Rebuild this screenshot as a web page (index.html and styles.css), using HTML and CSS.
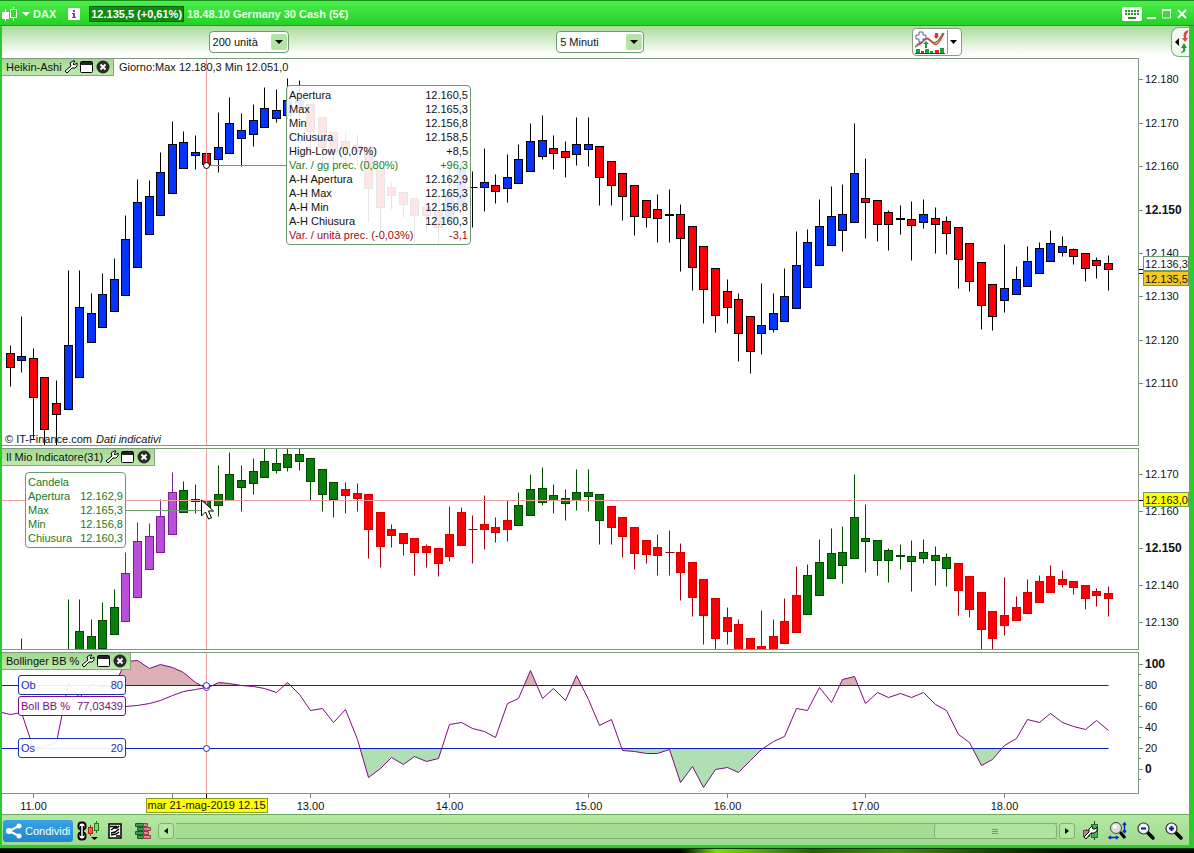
FILE: index.html
```html
<!DOCTYPE html>
<html lang="it">
<head>
    <meta charset="utf-8">
    <title>DAX - Germany 30 Cash (5€)</title>
    <link rel="stylesheet" href="styles.css">
</head>
<body>
    <!-- Shared icons -->
    <svg class="defs" width="0" height="0">
        <symbol id="wrench" viewBox="0 0 14 14">
            <path d="M1 11 L7 6 L6 3 L9 1 L11 1 L9 4 L10 5 L13 3 L13 6 L11 8 L8 8 L3 13 Z" fill="#fff" stroke="#000"/>
        </symbol>
        <symbol id="window" viewBox="0 0 14 14">
            <rect x="0.5" y="1.5" width="12" height="11" rx="1" fill="#fff" stroke="#000"/>
            <path d="M1 2h11v3H1z" fill="#222"/>
        </symbol>
        <symbol id="close" viewBox="0 0 14 14">
            <circle cx="7" cy="7" r="6.5" fill="#2c2c2c"/>
            <path d="M4.5 4.5l5 5M9.5 4.5l-5 5" stroke="#fff" stroke-width="2"/>
        </symbol>
        <symbol id="lens" viewBox="0 0 20 20">
            <path d="M11 11l6 6" stroke="#000" stroke-width="3.5" stroke-linecap="round"/>
            <circle cx="7.5" cy="7.5" r="5.5" fill="#f4f4f4" stroke="#333" stroke-width="1.2"/>
        </symbol>
    </svg>

    <div class="window">
        <header class="title-bar">
            <svg class="candle-logo" width="16" height="16" viewBox="0 0 16 16">
                <path d="M3.5 3v12M11.5 1v14" stroke="#fff"/>
                <rect x="0" y="6" width="7" height="7" fill="#fff"/>
                <rect x="8.5" y="3.5" width="6" height="8" fill="#39d939" stroke="#fff"/>
            </svg>
            <svg class="drop" width="8" height="4" viewBox="0 0 8 4"><path d="M0 0h8L4 4z" fill="#fff"/></svg>
            <span class="ticker">DAX</span>
            <svg class="info" width="12" height="12" viewBox="0 0 12 12">
                <rect width="12" height="12" rx="1" fill="#fff"/>
                <path d="M5 2h2v2H5zM4 5h3v4h1v1H4V9h1V6H4z" fill="#7a4aa0"/>
            </svg>
            <span class="quote">12.135,5 (+0,61%)</span>
            <span class="instrument">18.48.10 Germany 30 Cash (5€)</span>
            <div class="window-buttons">
                <button type="button" aria-label="Tastiera">
                    <svg width="20" height="14" viewBox="0 0 20 14">
                        <rect width="20" height="14" rx="2" fill="#fff"/>
                        <path d="M3 4h14M3 7h14" stroke="#1a9a1a" stroke-width="2" stroke-dasharray="2 1"/>
                        <path d="M6 11h8" stroke="#1a9a1a" stroke-width="2"/>
                    </svg>
                </button>
                <button type="button" aria-label="Riduci">
                    <svg width="10" height="12" viewBox="0 0 10 12"><path d="M0 10h9" stroke="#fff" stroke-width="2"/></svg>
                </button>
                <button type="button" aria-label="Ingrandisci">
                    <svg width="10" height="12" viewBox="0 0 10 12"><path d="M.5 2h8v8h-8z" fill="none" stroke="#d8ffd8"/><path d="M0 2h9" stroke="#fff" stroke-width="2"/></svg>
                </button>
                <button type="button" aria-label="Chiudi">
                    <svg width="11" height="12" viewBox="0 0 11 12"><path d="M1 2l8 8M9 2l-8 8" stroke="#fff" stroke-width="2"/></svg>
                </button>
            </div>
        </header>

        <div class="toolbar">
            <div class="combo">
                <select aria-label="Unità"><option>200 unità</option></select>
                <svg class="combo-arrow" width="16" height="16" viewBox="0 0 16 16"><path d="M4 6h8l-4 4z"/></svg>
            </div>
            <div class="combo combo-wide">
                <select aria-label="Periodo"><option>5 Minuti</option></select>
                <svg class="combo-arrow" width="16" height="16" viewBox="0 0 16 16"><path d="M4 6h8l-4 4z"/></svg>
            </div>
            <button type="button" class="indicator-button" aria-label="Indicatori">
                <svg width="32" height="24" viewBox="0 0 32 24">
                    <path d="M1 17c5-3 8-11 13-8s7 9 15-6" fill="none" stroke="#55883a" stroke-width="1.5"/>
                    <path d="M3 14c4 4 8-10 13-4s7 8 14-7" fill="none" stroke="#e04040" stroke-width="1.5"/>
                    <path d="M5 2h4v3h3v4H9v3H5V9H2V5h3z" fill="#fff" stroke="#5560a0"/>
                    <path d="M11 18v-4H9l3-3 3 3h-2v4z" fill="#1f9a3c"/>
                    <path d="M21 3h3v3h1l-3 3-2-3h1z" fill="#e03030"/>
                    <path d="M2 23v-4h4v4M11 23v-4h4v4M16 23v-2h3v2M26 23v-5h4v5" fill="#15a03a"/>
                    <path d="M7 23v-2h3v2M21 23v-3h4v3" fill="#e02020"/>
                    <path d="M1 23.5h30" stroke="#233a8a"/>
                </svg>
                <span class="split"><svg width="7" height="4" viewBox="0 0 7 4"><path d="M0 0h7L3.5 4z"/></svg></span>
            </button>
            <button type="button" class="side-tab" aria-label="Ordini">
                <svg width="16" height="26" viewBox="0 0 16 26">
                    <path d="M6 9v8l-4-4z"/>
                    <path d="M15 1q-6 2-4 8h-2l3 4 3-4h-2q0-4 2-6z" fill="#e04444"/>
                    <path d="M8 24q6-1 4-5h2l-3-5-3 5h2q1 3-2 4z" fill="#1a9a3a"/>
                </svg>
            </button>
        </div>

        <main class="charts">
            <section class="panel panel-price">
                <div class="plot">
                    <svg class="canvas" id="pricePlot"></svg>
                    <div class="panel-head">
                        <span>Heikin-Ashi</span>
                        <svg width="14" height="14"><use href="#wrench"/></svg>
                        <svg width="14" height="14"><use href="#window"/></svg>
                        <svg width="14" height="14"><use href="#close"/></svg>
                    </div>
                    <p class="day-range">Giorno:Max 12.180,3 Min 12.051,0</p>
                    <p class="copyright">© IT-Finance.com <i>Dati indicativi</i></p>
                    <table class="tip tip-price">
                        <tr><td>Apertura</td><td>12.160,5</td></tr>
                        <tr><td>Max</td><td>12.165,3</td></tr>
                        <tr><td>Min</td><td>12.156,8</td></tr>
                        <tr><td>Chiusura</td><td>12.158,5</td></tr>
                        <tr><td>High-Low (0,07%)</td><td>+8,5</td></tr>
                        <tr class="up"><td>Var. / gg prec. (0,80%)</td><td>+96,3</td></tr>
                        <tr><td>A-H Apertura</td><td>12.162,9</td></tr>
                        <tr><td>A-H Max</td><td>12.165,3</td></tr>
                        <tr><td>A-H Min</td><td>12.156,8</td></tr>
                        <tr><td>A-H Chiusura</td><td>12.160,3</td></tr>
                        <tr class="down"><td>Var. / unità prec. (-0,03%)</td><td>-3,1</td></tr>
                    </table>
                </div>
                <div class="axis">
                    <svg class="canvas" id="priceAxis"></svg>
                    <div class="tags tags-price">
                        <span class="tag">12.136,3</span>
                        <span class="tag tag-last">12.135,5</span>
                    </div>
                </div>
            </section>

            <section class="panel panel-indicator">
                <div class="plot">
                    <svg class="canvas" id="indicatorPlot"></svg>
                    <div class="panel-head">
                        <span>Il Mio Indicatore(31)</span>
                        <svg width="14" height="14"><use href="#wrench"/></svg>
                        <svg width="14" height="14"><use href="#window"/></svg>
                        <svg width="14" height="14"><use href="#close"/></svg>
                    </div>
                    <table class="tip tip-candle">
                        <tr><td colspan="2">Candela</td></tr>
                        <tr><td>Apertura</td><td>12.162,9</td></tr>
                        <tr><td>Max</td><td>12.165,3</td></tr>
                        <tr><td>Min</td><td>12.156,8</td></tr>
                        <tr><td>Chiusura</td><td>12.160,3</td></tr>
                    </table>
                </div>
                <div class="axis">
                    <svg class="canvas" id="indicatorAxis"></svg>
                    <div class="tags tags-indicator"><span class="tag tag-cursor">12.163,0</span></div>
                </div>
            </section>

            <section class="panel panel-bollinger">
                <div class="plot">
                    <svg class="canvas" id="bollingerPlot"></svg>
                    <div class="panel-head">
                        <span>Bollinger BB %</span>
                        <svg width="14" height="14"><use href="#wrench"/></svg>
                        <svg width="14" height="14"><use href="#window"/></svg>
                        <svg width="14" height="14"><use href="#close"/></svg>
                    </div>
                    <div class="level level-ob"><span>Ob</span><span>80</span></div>
                    <div class="level level-bb"><span>Boll BB %</span><span>77,03439</span></div>
                    <div class="level level-os"><span>Os</span><span>20</span></div>
                </div>
                <div class="axis"><svg class="canvas" id="bollingerAxis"></svg></div>
            </section>

            <div class="time-axis">
                <svg class="canvas" id="timeAxis"></svg>
                <span class="date-tag" id="dateTag">mar 21-mag-2019 12.15</span>
            </div>
        </main>

        <footer class="bottom-bar">
            <button type="button" class="share">
                <svg width="16" height="16" viewBox="0 0 16 16">
                    <path d="M13 3L3 8l10 5" fill="none" stroke="#fff" stroke-width="2"/>
                    <circle cx="13" cy="3" r="2.5" fill="#fff"/><circle cx="3" cy="8" r="3" fill="#fff"/><circle cx="13" cy="13" r="2.5" fill="#fff"/>
                </svg>
                Condividi
            </button>
            <button type="button" class="tool" aria-label="Collega grafici">
                <svg width="24" height="20" viewBox="0 0 24 20">
                    <rect x="1.5" y="1.5" width="7" height="7" rx="3" fill="#fff" stroke="#000" stroke-width="2"/>
                    <rect x="1.5" y="11.5" width="7" height="7" rx="3" fill="#fff" stroke="#000" stroke-width="2"/>
                    <path d="M5 5v10" stroke="#000" stroke-width="4"/>
                    <path d="M5 5v10" stroke="#fff" stroke-width="1.5"/>
                    <path d="M13.5 4v11" stroke="#b02020"/><rect x="11.5" y="6.5" width="4" height="6" fill="#f06060" stroke="#b02020"/>
                    <path d="M19.5 0v12" stroke="#207a20"/><rect x="17.5" y="2.5" width="4" height="7" fill="#70e070" stroke="#207a20"/>
                    <path d="M14 16h7l-3.5 3z"/>
                </svg>
            </button>
            <button type="button" class="tool tool-list" aria-label="Elenco">
                <svg width="14" height="16" viewBox="0 0 14 16">
                    <rect x="1" y="1" width="12" height="14" fill="#fff" stroke="#000" stroke-width="1.5"/>
                    <path d="M2 3.5h7M11 3l-2 2-3 0-3 2M11 6l-4 3-4 1M11 9l-3 2-5 1M8 13h4" stroke="#000" stroke-width="1.5" fill="none"/>
                </svg>
            </button>
            <button type="button" class="tool" aria-label="Book">
                <svg width="17" height="16" viewBox="0 0 17 16">
                    <path d="M.5 .5h8v3h-8zM2.5 4.5h6v3h-6zM.5 8.5h8v3h-8zM2.5 12.5h6v3h-6z" fill="#3d9a55" stroke="#1a5a2a"/>
                    <path d="M8.5 .5h4v3h-4zM8.5 4.5h7v3h-7zM8.5 8.500h5v3h-5zM8.5 12.5h7v3h-7z" fill="#e88090" stroke="#904050"/>
                </svg>
            </button>
            <div class="scroller">
                <button type="button" class="scroll-button" aria-label="Indietro"><svg width="4" height="6" viewBox="0 0 4 6"><path d="M4 0v6L0 3z"/></svg></button>
                <div class="track"><div class="thumb"><i></i><i></i><i></i></div></div>
                <button type="button" class="scroll-button" aria-label="Avanti"><svg width="4" height="6" viewBox="0 0 4 6"><path d="M0 0v6l4-3z"/></svg></button>
            </div>
            <div class="zoom-tools">
                <button type="button" class="tool" aria-label="Impostazioni">
                    <svg width="18" height="20" viewBox="0 0 18 20">
                        <path d="M4.5 8v10M12.5 0v19" stroke="#333"/>
                        <rect x="1.5" y="9.5" width="6" height="6" fill="#c08090" stroke="#704050"/>
                        <rect x="9.5" y="3.5" width="6" height="13" fill="#4cae5c" stroke="#207030"/>
                        <path d="M2 16l5-5 0-3 3-3 1 3 2 0 2-2 0 4-3 2-3 0-5 6z" fill="#fff" stroke="#000"/>
                    </svg>
                </button>
                <button type="button" class="tool" aria-label="Adatta">
                    <svg width="20" height="20" viewBox="0 0 20 20">
                        <path d="M12 11l5 6" stroke="#000" stroke-width="3"/>
                        <circle cx="8" cy="7" r="5.5" fill="#ddd" stroke="#444"/>
                        <circle cx="7" cy="5.5" r="2" fill="#fff"/>
                        <path d="M16.5 2v9M15 4l1.5-2L18 4M15 9.5l1.5 2 1.5-2M1 16.5h9M3 15l-2 1.5L3 18M8 15l2 1.5L8 18" stroke="#0a2acc" fill="none" stroke-width="1.5"/>
                    </svg>
                </button>
                <button type="button" class="tool" aria-label="Riduci zoom">
                    <svg width="20" height="20"><use href="#lens"/><path d="M5 7.5h5" stroke="#0018b0" stroke-width="2"/></svg>
                </button>
                <button type="button" class="tool" aria-label="Aumenta zoom">
                    <svg width="20" height="20"><use href="#lens"/><path d="M5 7.5h5M7.5 5v5" stroke="#0018b0" stroke-width="2"/></svg>
                </button>
            </div>
        </footer>
    </div>

    <script>
        const NS = 'http://www.w3.org/2000/svg';
        const BASE_WIDTH = 1136;
        const CURSOR = 17;

        // Heikin-Ashi candles: high, body top, body bottom, low, colour (b/r/k)
        const candles = [
            [345,353,367,386,'r'], [316,356,360,372,'b'], [348,358,397,438,'r'], [377,377,429,445,'r'],
            [380,403,414,445,'r'], [270,345,409,409,'b'], [270,307,377,377,'b'], [293,313,342,342,'b'],
            [273,294,327,327,'b'], [258,279,311,311,'b'], [215,239,295,295,'b'], [179,202,267,267,'b'],
            [180,196,234,234,'b'], [152,172,215,215,'b'], [121,144,193,193,'b'], [131,142,168,168,'b'],
            [135,152,155,169,'b'], [143,153,164,181,'r'], [112,147,159,172,'b'], [97,123,153,153,'b'],
            [113,130,138,166,'b'], [104,120,134,146,'b'], [87,108,127,127,'b'], [89,110,118,122,'b'],
            [78,100,115,119,'b'], [80,100,108,118,'b'], [104,104,131,153,'r'], [117,117,147,166,'r'],
            [132,132,152,174,'r'], [132,141,148,169,'r'], [134,145,151,166,'r'], [147,147,188,222,'r'],
            [168,168,207,232,'r'], [182,187,195,209,'r'], [192,192,204,218,'r'], [198,198,215,242,'r'],
            [205,207,215,232,'r'], [210,210,227,243,'r'], [160,194,219,225,'b'], [162,168,206,206,'b'],
            [171,187,187,227,'k'], [148,182,187,211,'b'], [174,185,191,203,'r'], [154,177,188,202,'b'],
            [144,159,183,183,'b'], [123,141,171,171,'b'], [115,140,156,159,'b'], [135,148,153,169,'r'],
            [141,151,157,177,'r'], [117,144,154,165,'b'], [117,144,149,166,'b'], [146,146,177,205,'r'],
            [161,161,185,205,'r'], [173,173,196,220,'r'], [185,185,216,235,'r'], [200,200,217,227,'r'],
            [194,209,218,242,'r'], [189,214,215,242,'k'], [204,214,238,271,'r'], [226,226,267,290,'r'],
            [246,246,289,323,'r'], [268,268,315,332,'r'], [279,291,307,323,'r'], [293,299,333,361,'r'],
            [316,316,351,373,'r'], [283,325,333,354,'b'], [293,313,329,332,'b'], [268,296,321,321,'b'],
            [231,265,308,308,'b'], [229,242,287,287,'b'], [199,226,265,265,'b'], [186,216,245,245,'b'],
            [184,214,230,251,'b'], [123,173,222,222,'b'], [158,198,202,238,'r'], [200,200,224,241,'r'],
            [210,212,224,250,'r'], [205,218,219,234,'k'], [201,219,225,260,'r'], [199,214,222,228,'b'],
            [207,218,224,253,'r'], [216,221,233,254,'r'], [227,227,259,288,'r'], [243,243,281,291,'r'],
            [262,262,305,329,'r'], [284,284,316,330,'r'], [244,288,300,312,'b'], [266,279,294,294,'b'],
            [246,261,286,286,'b'], [242,248,273,273,'b'], [230,243,261,261,'b'], [236,246,252,256,'b'],
            [248,249,256,264,'r'], [253,253,268,281,'r'], [257,260,265,278,'r'], [255,263,269,290,'r']
        ];

        // Bollinger %B line
        const bollinger = [
            714,712,748,746,742,682,697,684,686,685,661,660,668,664,667,672,682,688,682,683,685,686,688,692,
            682,694,710,708,722,709,739,777,768,757,764,756,761,758,724,722,728,731,737,703,698,670,698,688,
            700,675,699,725,719,750,751,753,753,749,782,766,787,769,767,772,760,749,741,736,708,710,687,702,
            679,676,703,692,697,693,697,692,704,710,734,742,765,759,745,738,719,722,713,722,726,729,720,730
        ];
        // Smoothed value drawn next to the label box
        const smoothed = [[10,706],[11,705],[12,703],[13,700],[14,695],[15,691],[16,689],[17,687]];

        const priceColors = {
            b: ['#0433ff', '#000', '#000'],
            r: ['#fb0007', '#000', '#000'],
            k: ['#000', '#000', '#000']
        };
        const green = ['#0a7d0a', '#004800', '#004800'];
        const red = ['#fb0007', '#d40000', '#a00010'];
        const violet = ['#b94fd8', '#7a1f96', '#7a1f96'];

        function indicatorColor(i) {
            if (i >= 10 && i <= 14) return violet;
            if (i < 29 || (i >= 44 && i <= 51) || (i >= 69 && i <= 81)) return green;
            return red;
        }

        function add(parent, tag, attrs, text) {
            const el = document.createElementNS(NS, tag);
            for (const key in attrs) el.setAttribute(key, attrs[key]);
            if (text) el.textContent = text;
            parent.appendChild(el);
            return el;
        }

        function line(svg, x1, y1, x2, y2, stroke) {
            return add(svg, 'line', {x1, y1, x2, y2, stroke});
        }

        let scale = 1;
        const xAt = i => Math.floor((8.3 + 11.56 * i) * scale) + 0.5;
        const yPrice = y => y - 59 + 0.5;
        const yIndicator = y => Math.round(25 + (y - 123) * 0.852) + 0.5;
        const yBollinger = y => y - 653 + 0.5;

        function drawCandles(svg, yOf, colorOf) {
            candles.forEach((c, i) => {
                const x = xAt(i);
                const [fill, stroke, wick] = colorOf(c, i);
                const top = yOf(c[1]);
                const height = yOf(c[2]) - top;
                line(svg, x, yOf(c[0]), x, yOf(c[3]), wick);
                if (height < 1) line(svg, x - 4, top, x + 5, top, wick);
                else add(svg, 'rect', {x: x - 4, y: top, width: 8, height, fill, stroke});
            });
        }

        function drawAxis(svg, labels) {
            for (const [text, y, bold] of labels) {
                line(svg, 0, y + 0.5, text ? 4 : 2, y + 0.5, '#6f8f6f');
                if (text) add(svg, 'text', {x: 6, y: y + 4, class: bold ? 'major' : ''}, text);
            }
        }

        function drawBollinger(svg) {
            const points = bollinger.map((y, i) => [xAt(i), yBollinger(y)]);
            const ob = yBollinger(685), os = yBollinger(748);
            const end = xAt(95);
            const defs = add(svg, 'defs', {});
            add(add(defs, 'clipPath', {id: 'above'}), 'rect', {x: 0, y: 0, width: end, height: ob});
            add(add(defs, 'clipPath', {id: 'below'}), 'rect', {x: 0, y: os, width: end, height: 60});
            const path = points.map(p => p.join(' ')).join(' L ');
            add(svg, 'path', {d: `M ${points[0][0]} ${ob} L ${path} L ${end} ${ob} Z`, fill: '#dbb0b4', 'clip-path': 'url(#above)'});
            add(svg, 'path', {d: `M ${points[0][0]} ${os} L ${path} L ${end} ${os} Z`, fill: '#b0dfb4', 'clip-path': 'url(#below)'});
            line(svg, 0, ob, end, ob, '#1020c0');
            line(svg, 0, os, end, os, '#1020c0');
            add(svg, 'path', {d: `M 0 ${yBollinger(712)} L ${path}`, class: 'boll'});
            add(svg, 'path', {d: 'M ' + smoothed.map(p => xAt(p[0]) + ' ' + yBollinger(p[1])).join(' L '), class: 'boll'});
        }

        function draw() {
            document.querySelectorAll('svg.canvas').forEach(svg => svg.replaceChildren());
            scale = pricePlot.clientWidth / BASE_WIDTH;
            const cx = xAt(CURSOR);

            drawCandles(pricePlot, yPrice, c => priceColors[c[4]]);
            line(pricePlot, cx, yPrice(165), 286, yPrice(165), '#6f9f6f');
            line(pricePlot, cx, 0, cx, 400, '#f0a0a0');
            add(pricePlot, 'circle', {cx, cy: yPrice(165), r: 3, fill: '#fff', stroke: '#000'});

            drawCandles(indicatorPlot, yIndicator, (c, i) => indicatorColor(i));
            line(indicatorPlot, 123, 61.5, cx, 61.5, '#6f9f6f');
            line(indicatorPlot, cx, 0, cx, 210, '#f0a0a0');
            line(indicatorPlot, 0, 51.5, '100%', 51.5, '#f0a0a0');
            add(indicatorPlot, 'path', {
                d: 'M0 0V16L4 12L7 19L10 18L7 11H12Z', transform: `translate(${cx - 5} 51)`,
                fill: '#fff', stroke: '#000'
            });

            drawBollinger(bollingerPlot);
            line(bollingerPlot, cx, 0, cx, 150, '#f0a0a0');
            [[687, '#8a1090'], [685, '#1030c0'], [748, '#1030c0']].forEach(([y, stroke]) =>
                add(bollingerPlot, 'circle', {cx, cy: yBollinger(y), r: 3, fill: '#fff', stroke}));

            drawAxis(priceAxis, [
                ['12.180', 20], ['12.170', 64], ['12.160', 107], ['12.150', 151, true],
                ['12.140', 194], ['12.130', 237], ['12.120', 281], ['12.110', 324]
            ]);
            line(priceAxis, 0, 210.5, 5, 210.5, '#000');
            line(priceAxis, 0, 214.5, 5, 214.5, '#000');
            drawAxis(indicatorAxis, [
                ['12.170', 25], ['12.160', 62], ['12.150', 99, true], ['12.140', 136], ['12.130', 173]
            ]);
            line(indicatorAxis, 0, 51.5, 5, 51.5, '#000');
            drawAxis(bollingerAxis, [
                ['100', 11, true], ['', 21], ['80', 32], ['', 42], ['60', 53], ['', 63],
                ['40', 74], ['', 84], ['20', 95], ['', 105], ['0', 116, true], ['', 126]
            ]);

            for (let hour = 11; hour <= 18; hour++) {
                const x = xAt(2 + (hour - 11) * 12);
                line(timeAxis, x, 0, x, 4, '#6f8f6f');
                if (hour !== 12) add(timeAxis, 'text', {x, y: 16, 'text-anchor': 'middle'}, hour + '.00');
            }
            line(timeAxis, cx, 0, cx, 4, '#000');
            dateTag.style.left = cx + 'px';
        }

        draw();
        window.addEventListener('resize', draw);
    </script>
</body>
</html>
```
FILE: styles.css
```css
* {
    box-sizing: border-box;
}
body {
    margin: 0;
    min-height: 100vh;
    background: #000 linear-gradient(90deg, #000 57%, #7be010 60%, #2c6000 68%, #4a8a08 75%, #1a3a00 84%, #000 90%);
    font-family: "Liberation Sans", Arial, sans-serif;
    font-size: 11px;
    line-height: 14px;
    color: #111;
}
button {
    padding: 0;
    border: 0;
    background: none;
    font: inherit;
    color: inherit;
}
svg {
    display: block;
    flex: none;
}
.defs {
    position: absolute;
}
.window {
    display: flex;
    flex-direction: column;
    border: solid #2fc92f;
    border-width: 0 5px 3px 2px;
    box-shadow: 0 1px 0 #0a3a0a;
    background: #fff;
}

/* Title bar */
.title-bar {
    display: flex;
    align-items: center;
    height: 26px;
    margin: 0 -5px 0 -2px;
    padding: 2px 6px 0 2px;
    border-top: 1px solid #169016;
    border-bottom: 1px solid #1f9f1f;
    background: linear-gradient(#4cee4c, #28cf28);
    color: #e4ffe4;
    font-weight: bold;
}
.drop {
    margin-left: 4px;
}
.ticker {
    margin-left: 3px;
}
.info {
    margin-left: 12px;
}
.quote {
    margin-left: 9px;
    padding: 0 1px;
    border: 1px solid #075a07;
    background: #108a10;
    color: #fff;
}
.instrument {
    margin-left: 3px;
}
.window-buttons {
    display: flex;
    align-items: center;
    gap: 5px;
    margin-left: auto;
}

/* Toolbar */
.toolbar {
    display: flex;
    align-items: center;
    height: 32px;
    padding-left: 17.4%;
    background: linear-gradient(#a9db99, #fff 90%);
}
.combo {
    display: grid;
    align-items: center;
    width: 80px;
    margin-right: 27.3%;
}
.combo-wide {
    width: 88px;
}
.combo select,
.combo-arrow {
    grid-area: 1 / 1;
}
.combo select {
    appearance: none;
    height: 22px;
    padding: 0 3px;
    border: 1px solid #6f9a6f;
    border-radius: 4px;
    background: #fff;
    font: inherit;
    color: inherit;
}
.combo-arrow {
    justify-self: end;
    margin-right: 2px;
    border-radius: 2px;
    background: #b4e4a4;
    pointer-events: none;
}
.indicator-button {
    display: flex;
    width: 50px;
    height: 28px;
    padding: 1px;
    border: 1px solid #8a9a8a;
    border-radius: 4px;
    background: #fff;
}
.split {
    display: grid;
    place-items: center;
    align-self: stretch;
    flex: 1;
    margin-left: 1px;
    border-left: 1px solid #8a9a8a;
}
.side-tab {
    width: 18px;
    height: 30px;
    margin-left: auto;
    padding-left: 1px;
    border: 1px solid #7faf7f;
    border-right: 0;
    border-radius: 8px 0 0 8px;
    background: #f2faf0;
}

/* Chart panels */
.panel {
    display: grid;
    grid-template-columns: 1fr 50px;
    grid-template-rows: 100%;
    margin-bottom: 2px;
}
.panel-price {
    height: 388px;
}
.panel-indicator {
    height: 202px;
}
.panel-bollinger {
    height: 142px;
    margin-bottom: 0;
}
.plot {
    position: relative;
    overflow: hidden;
    border: 1px solid #7f997f;
    border-left: 0;
}
.axis {
    position: relative;
    padding-top: 1px;
}
.canvas {
    width: 100%;
    height: 100%;
    fill: #111;
}
.major {
    font-size: 12px;
    font-weight: bold;
}
.boll {
    fill: none;
    stroke: #800a80;
}
.panel-head {
    position: absolute;
    top: 0;
    left: 0;
    display: flex;
    align-items: center;
    gap: 2px;
    height: 17px;
    padding: 0 3px 0 4px;
    border: solid #86a878;
    border-width: 0 1px 1px 0;
    background: linear-gradient(#a4d892, #bdeaac);
}
.day-range {
    position: absolute;
    top: 1px;
    left: 117px;
    margin: 0;
}
.copyright {
    position: absolute;
    bottom: -1px;
    left: 3px;
    margin: 0;
}
.copyright i {
    margin-left: 1px;
}

/* Value boxes */
.tip {
    position: absolute;
    padding: 2px;
    border: 1px solid #6f9a6f;
    border-radius: 4px;
    border-spacing: 0;
    background: rgba(255, 255, 255, 0.9);
}
.tip td {
    padding: 0;
    white-space: nowrap;
}
.tip td + td {
    text-align: right;
}
.tip-price {
    top: 26px;
    left: 284px;
    width: 185px;
}
.tip-price .up {
    color: #1a801a;
}
.tip-price .down {
    color: #a00a14;
}
.tip-candle {
    top: 23px;
    left: 23px;
    width: 101px;
    color: #1a7a1a;
}
.level {
    position: absolute;
    left: 16px;
    display: flex;
    justify-content: space-between;
    align-items: center;
    width: 108px;
    height: 20px;
    padding: 0 2px;
    border: 1px solid #1a30b8;
    border-radius: 3px;
    background: rgba(255, 255, 255, 0.92);
    color: #1a30b8;
}
.level-ob {
    top: 22px;
}
.level-bb {
    top: 43px;
    border-color: #800a80;
    color: #800a80;
}
.level-os {
    top: 85px;
}
.tags {
    position: absolute;
    left: 4px;
    right: 0;
    display: flex;
    flex-direction: column;
}
.tags-price {
    top: 198px;
}
.tags-indicator {
    top: 44px;
}
.tag {
    height: 15px;
    padding-left: 1px;
    border: 1px solid #6f9a6f;
    background: #fff;
}
.tag-last {
    background: #f8c81c;
}
.tag-cursor {
    background: #ff0;
}

/* Time axis */
.time-axis {
    position: relative;
    height: 20px;
}
.time-axis .canvas {
    width: calc(100% - 51px);
}
.date-tag {
    position: absolute;
    top: 4px;
    transform: translateX(-50%);
    padding: 0 1px;
    border: 1px solid #8a9a20;
    background: #ff0;
    line-height: 13px;
    white-space: nowrap;
}

/* Bottom bar */
.bottom-bar {
    display: flex;
    align-items: center;
    height: 31px;
    padding: 2px 5px 0 1px;
    border-top: 1px solid #6fa860;
    background: linear-gradient(#b4e8a2, #a0da8e);
}
.share {
    display: flex;
    align-items: center;
    gap: 3px;
    height: 22px;
    padding: 0 3px;
    border-radius: 3px;
    background: linear-gradient(#3aa4e4, #1c86d0);
    color: #fff;
}
.tool {
    margin-left: 4px;
}
.tool-list {
    margin: 0 9px 0 7px;
}
.scroller {
    display: flex;
    flex: 1;
    align-items: center;
    gap: 2px;
    margin-left: 6px;
}
.scroll-button {
    display: grid;
    place-items: center;
    width: 16px;
    height: 16px;
    border: 1px solid #7fb070;
    border-radius: 3px;
    background: #b4e8a2;
}
.track {
    flex: 1;
    height: 16px;
    border: solid #7fb070;
    border-width: 1px 0;
    background: #a4dc92;
}
.thumb {
    display: flex;
    flex-direction: column;
    align-items: center;
    justify-content: center;
    gap: 1px;
    width: 14%;
    height: 14px;
    margin-left: auto;
    border: solid #7fb070;
    border-width: 0 1px;
    border-radius: 3px;
    background: #b0e49e;
}
.thumb i {
    width: 6px;
    height: 1px;
    background: #6fa060;
}
.zoom-tools {
    display: flex;
    gap: 4px;
    margin-left: 3px;
}
```
